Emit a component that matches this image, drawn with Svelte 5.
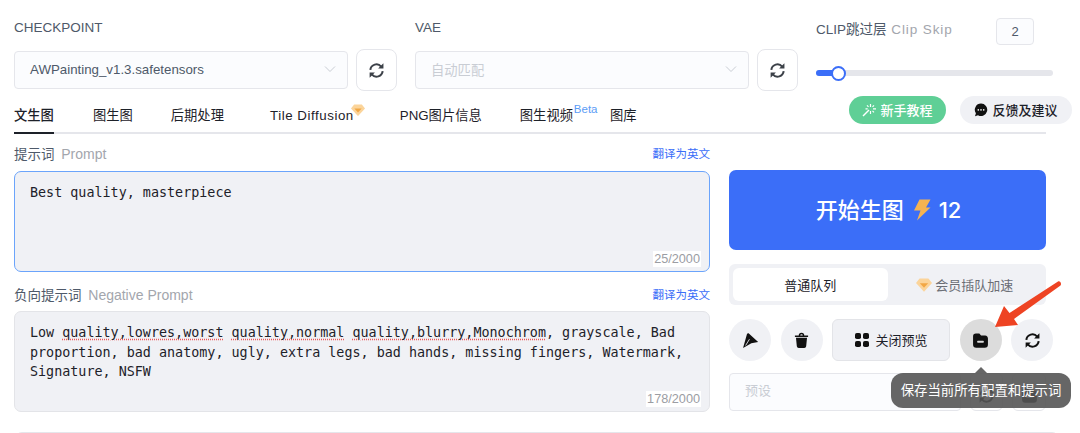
<script>
	const tabs = ['文生图', '图生图', '后期处理', 'Tile Diffusion', 'PNG图片信息', '图生视频', '图库'];
</script>

{#snippet refresh()}
	<svg viewBox="0 0 16 16" width="17" height="17" fill="none" stroke="currentColor" stroke-width="1.9">
		<path d="M2.2 7.400A5.800 5.800 0 0 1 12.400 4.300" />
		<path d="M13.800 8.600A5.800 5.800 0 0 1 3.600 11.700" />
		<path d="M14.500 1.200v5h-5z" fill="currentColor" stroke="none" />
		<path d="M1.500 14.800v-5h5z" fill="currentColor" stroke="none" />
	</svg>
{/snippet}

{#snippet chevron()}
	<svg class="chevron" viewBox="0 0 12 8" width="12" height="8" fill="none" stroke="#c9cdd4" stroke-width="1">
		<path d="M1 1.500l5 5 5-5" />
	</svg>
{/snippet}

{#snippet gem(size)}
	<svg viewBox="0 0 16 14" width={size} height={size * 0.875}>
		<path d="M3.600 0.500h8.800L16 5 8 13.800 0 5z" fill="#fbd49a" />
		<path d="M3.800 5.200h8.400L8 9.800z" fill="#f2a744" />
	</svg>
{/snippet}

{#snippet folder(fill, dash)}
	<svg viewBox="0 0 16 16" width="17" height="17">
		<path d="M1 4.200A2.700 2.700 0 0 1 3.700 1.500h2.500c.8 0 1.200.4 1.700 1l.6.700h3.800A3 3 0 0 1 15 6.200v5.600a3 3 0 0 1-3 3H4a3 3 0 0 1-3-3z" fill={fill} />
		<rect x="4.800" y="8.300" width="6.400" height="1.700" rx=".8" fill={dash} />
	</svg>
{/snippet}

<div class="page">
	<div class="top">
		<div class="field">
			<div class="field-label">CHECKPOINT</div>
			<div class="select-row">
				<div class="select">
					<span>AWPainting_v1.3.safetensors</span>
					{@render chevron()}
				</div>
				<button class="square">{@render refresh()}</button>
			</div>
		</div>
		<div class="field">
			<div class="field-label">VAE</div>
			<div class="select-row">
				<div class="select placeholder">
					<span>自动匹配</span>
					{@render chevron()}
				</div>
				<button class="square">{@render refresh()}</button>
			</div>
		</div>
		<div class="clip">
			<div class="clip-head">
				<span>CLIP跳过层 <em class="skip">Clip Skip</em></span>
				<div class="clip-value">2</div>
			</div>
			<div class="slider">
				<div class="slider-fill"></div>
				<div class="slider-thumb"></div>
			</div>
		</div>
	</div>

	<div class="tabs-row">
		<div class="tabs">
			{#each tabs as tab, i}
				<div class="tab" class:active={i === 0}>
					{tab}
					{#if tab === 'Tile Diffusion'}
						<span class="tab-gem">{@render gem(14)}</span>
					{/if}
					{#if tab === '图生视频'}
						<sup>Beta</sup>
					{/if}
				</div>
			{/each}
		</div>
		<div class="pills">
			<div class="pill green">
				<svg viewBox="0 0 14 14" width="14" height="14" fill="none" stroke="#fff" stroke-width="1.200">
					<path d="M1 13L7 7" stroke-width="1.500" />
					<path d="M8.500 1v3M8.500 8v3M3.500 5.800h2.200M11 5.800h3M5 2.300l1.500 1.500M10.500 7.800l1.500 1.500M12 2.300L10.500 3.800" />
				</svg>
				新手教程
			</div>
			<div class="pill grey">
				<svg viewBox="0 0 14 14" width="14" height="14">
					<path d="M7 .6a6.200 6.200 0 1 1-3 11.600L1 13.200l.9-2.900A6.200 6.200 0 0 1 7 .6z" fill="#111" />
					<circle cx="4.300" cy="6.900" r=".8" fill="#fff" />
					<circle cx="7" cy="6.900" r=".8" fill="#fff" />
					<circle cx="9.700" cy="6.900" r=".8" fill="#fff" />
				</svg>
				反馈及建议
			</div>
		</div>
	</div>

	<div class="main">
		<div class="prompts">
			<div class="prompt-head">
				<span>提示词 <em>Prompt</em></span>
				<span class="translate">翻译为英文</span>
			</div>
			<div class="prompt focused">
				Best quality, masterpiece
				<span class="count">25/2000</span>
			</div>
			<div class="prompt-head second">
				<span>负向提示词 <em>Negative Prompt</em></span>
				<span class="translate">翻译为英文</span>
			</div>
			<div class="prompt">
				Low <u>quality,lowres,worst</u> <u>quality,normal</u> <u>quality,blurry,Monochrom</u>, grayscale, Bad proportion, bad anatomy, ugly, extra legs, bad hands, missing fingers, Watermark, Signature, NSFW
				<span class="count">178/2000</span>
			</div>
		</div>

		<div class="side">
			<button class="start">
				<span class="start-text">开始生图</span>
				<svg viewBox="0 0 18 22" width="18" height="22">
					<path d="M6.500 .5h11L13 8.500h4.500L4 21.500 7.500 11.500H1z" fill="#f6b352" />
				</svg>
				<span class="cost">12</span>
			</button>
			<div class="queue">
				<div class="queue-item on">普通队列</div>
				<div class="queue-item">{@render gem(16)} 会员插队加速</div>
			</div>
			<div class="actions">
				<div class="round">
					<svg viewBox="0 0 16 16" width="17" height="17">
						<path d="M4.700 1.800c.5-.8 1.300-.8 2-.2L15.200 9.500 8.800 10.500 1 15z" fill="#111" />
						<path d="M3.400 12.700L7 6.800" stroke="#f0f1f5" stroke-width=".8" />
					</svg>
				</div>
				<div class="round">
					<svg viewBox="0 0 16 16" width="17" height="17" fill="#111">
						<path d="M1.800 3.200h12.400v1.500H1.800zM5.400 3.200a2.600 2.400 0 0 1 5.200 0H9.200a1.200 1 0 0 0-2.400 0z" />
						<path d="M2.800 5.400h10.400l-.8 8a1.800 1.800 0 0 1-1.800 1.600H5.400a1.800 1.800 0 0 1-1.800-1.600z" />
					</svg>
				</div>
				<div class="preview">
					<svg viewBox="0 0 16 16" width="16" height="16" fill="#111">
						<rect x="1" y="1" width="6" height="6" rx="1.800" />
						<rect x="9" y="1" width="6" height="6" rx="1.800" />
						<rect x="1" y="9" width="6" height="6" rx="1.800" />
						<rect x="9" y="9" width="6" height="6" rx="1.800" />
					</svg>
					<span class="preview-text">关闭预览</span>
				</div>
				<div class="round hover">{@render folder('#111', '#ddd')}</div>
				<div class="round">{@render refresh()}</div>
			</div>
			<div class="preset">
				<div class="preset-input">预设</div>
				<div class="preset-btn">{@render refresh()}</div>
				<div class="preset-btn">{@render folder('#111', '#fff')}</div>
			</div>
			<div class="tooltip">保存当前所有配置和提示词</div>
			<svg class="pointer" viewBox="990 278 75 52" width="75" height="52">
				<path d="M995 327L1004 306 1009.500 313 1058 281.500c2-1 4 2 2.500 4L1014 319 1018 325z" fill="#ee4323" />
			</svg>
		</div>
	</div>

	<div class="next-panel"></div>
</div>

<style>
	:global(body) {
		background: #fff;
	}

	.page {
		position: relative;
		width: 1080px;
		height: 433px;
		overflow: hidden;
		box-sizing: border-box;
		padding: 0 0 0 14px;
		font-family: "Liberation Sans", "Noto Sans CJK SC", sans-serif;
		color: #1d2129;
	}

	em {
		font-style: normal;
		font-size: 14px;
		color: #a3a6ad;
		margin-left: 3px;
	}

	em.skip {
		font-size: 13.500px;
		letter-spacing: 0.9px;
		margin-left: 1px;
	}

	.top {
		display: flex;
		height: 94px;
	}

	.field {
		width: 383px;
		margin-right: 18px;
		padding-top: 20px;
	}

	.field-label {
		font-size: 13.500px;
		line-height: 16px;
		color: #4e5969;
		margin-bottom: 13px;
	}

	.select-row {
		display: flex;
		align-items: center;
		gap: 8px;
	}

	.select {
		flex: 1;
		height: 38px;
		box-sizing: border-box;
		display: flex;
		align-items: center;
		justify-content: space-between;
		padding: 0 11px 2px 15px;
		background: #fbfcfe;
		border: 1px solid #e5e6eb;
		border-radius: 4px;
		font-size: 13.300px;
		color: #4e5969;
	}

	.placeholder {
		color: #c9cdd4;
	}

	.square {
		width: 41px;
		height: 42px;
		flex: none;
		display: flex;
		align-items: center;
		justify-content: center;
		padding: 0;
		background: #fff;
		border: 1px solid #e5e6eb;
		border-radius: 8px;
		color: #3c4148;
	}

	.clip {
		width: 237px;
		padding-top: 18px;
	}

	.clip-head {
		display: flex;
		align-items: flex-start;
		justify-content: space-between;
		height: 27px;
		padding-right: 19px;
		font-size: 13.500px;
		line-height: 24px;
		color: #4e5969;
	}

	.clip-value {
		width: 38px;
		height: 27px;
		box-sizing: border-box;
		border: 1px solid #e5e6eb;
		border-radius: 4px;
		background: #fbfcfe;
		display: flex;
		align-items: center;
		justify-content: center;
		font-size: 13px;
	}

	.slider {
		position: relative;
		height: 6px;
		margin-top: 25px;
		background: #e5e6eb;
		border-radius: 3px;
	}

	.slider-fill {
		width: 22px;
		height: 6px;
		background: #3b6ef8;
		border-radius: 3px;
	}

	.slider-thumb {
		position: absolute;
		left: 15px;
		top: -4.500px;
		width: 15px;
		height: 15px;
		box-sizing: border-box;
		background: #fff;
		border: 2.500px solid #3b6ef8;
		border-radius: 50%;
	}

	.tabs-row {
		position: relative;
		width: 1032px;
		height: 38px;
		border-bottom: 2px solid #e5e6eb;
		display: flex;
		justify-content: space-between;
	}

	.tabs {
		display: flex;
	}

	.tab {
		position: relative;
		height: 40px;
		box-sizing: border-box;
		padding-top: 13px;
		margin-right: 38px;
		font-size: 13.300px;
		line-height: 18px;
		color: #1d2129;
		white-space: nowrap;
	}

	.tab:nth-child(1) {
		margin-right: 39px;
	}

	.tab:nth-child(3),
	.tab:nth-child(4) {
		margin-right: 46px;
	}

	.tab:nth-child(4) {
		letter-spacing: 0.55px;
	}

	.tab:nth-child(6) {
		margin-right: 37px;
	}

	.tab.active {
		font-weight: 500;
		border-bottom: 2px solid #1d2129;
	}

	.tab-gem {
		position: absolute;
		right: -11px;
		top: 9px;
	}

	sup {
		position: absolute;
		left: 54px;
		top: 9px;
		font-size: 11.500px;
		line-height: 12px;
		color: #5b9cf6;
		vertical-align: baseline;
	}

	.pills {
		position: absolute;
		left: 835px;
		top: 2px;
		display: flex;
		gap: 14px;
	}

	.pill {
		height: 28px;
		box-sizing: border-box;
		padding-bottom: 1px;
		display: flex;
		align-items: center;
		justify-content: center;
		gap: 4px;
		border-radius: 15px;
		font-size: 13px;
		font-weight: 500;
		white-space: nowrap;
	}

	.green {
		width: 97px;
		background: #5fcf96;
		color: #fff;
	}

	.grey {
		width: 112px;
		background: #f0f1f5;
	}

	.main {
		display: flex;
		gap: 19px;
	}

	.prompts {
		width: 696px;
	}

	.prompt-head {
		display: flex;
		align-items: center;
		justify-content: space-between;
		box-sizing: border-box;
		height: 37px;
		padding-top: 1px;
		font-size: 13.500px;
		color: #4e5969;
	}

	.prompt-head.second {
		height: 39px;
		padding-top: 4px;
	}

	.translate {
		font-size: 11.500px;
		color: #3b6ef8;
	}

	.prompt {
		position: relative;
		height: 101px;
		box-sizing: border-box;
		padding: 11px 15px;
		background: #f0f1f5;
		border: 1px solid #e3e4e8;
		border-radius: 7px;
		font-family: "DejaVu Sans Mono", monospace;
		font-size: 13.400px;
		line-height: 19.500px;
		color: #1d2129;
	}

	.prompt.focused {
		border-color: #6ba4fb;
	}

	u {
		text-decoration: underline dotted #ea5a5a;
		text-underline-offset: 2px;
	}

	.count {
		position: absolute;
		right: 8px;
		bottom: 4px;
		padding: 0 1px;
		background: #fff;
		font-family: "Liberation Sans", sans-serif;
		font-size: 12.700px;
		line-height: 16px;
		color: #9b9da3;
	}

	.side {
		position: relative;
		width: 317px;
		padding-top: 36px;
	}

	.start {
		width: 100%;
		height: 80px;
		display: flex;
		align-items: center;
		justify-content: center;
		gap: 8px;
		padding: 0;
		background: #3b6ef8;
		border: 0;
		border-radius: 7px;
		color: #fff;
		font-family: inherit;
		font-size: 22px;
		font-weight: 500;
	}

	.start-text {
		margin: 0 1px 4px 2px;
	}

	.cost {
		font-family: Inter, sans-serif;
		font-weight: 500;
	}

	.queue {
		display: flex;
		height: 41px;
		box-sizing: border-box;
		margin-top: 14px;
		padding: 4px;
		background: #f0f1f5;
		border-radius: 6px;
	}

	.queue-item {
		display: flex;
		align-items: center;
		justify-content: center;
		gap: 3px;
		width: 155px;
		border-radius: 6px;
		font-size: 13px;
		color: #6b6e75;
	}

	.queue-item.on {
		background: #fff;
		color: #1d2129;
	}

	.actions {
		display: flex;
		align-items: center;
		margin-top: 14px;
		width: 324px;
		justify-content: space-between;
	}

	.round {
		width: 42px;
		height: 42px;
		display: flex;
		align-items: center;
		justify-content: center;
		border-radius: 50%;
		background: #f0f1f5;
		color: #111;
	}

	.round.hover {
		background: #dcdcdc;
	}

	.preview {
		width: 118px;
		height: 42px;
		box-sizing: border-box;
		display: flex;
		align-items: center;
		justify-content: center;
		gap: 5px;
		background: #f0f1f5;
		border: 1px solid #e3e4e8;
		border-radius: 6px;
		font-size: 13px;
		color: #1d2129;
	}

	.preview-text {
		margin-bottom: 2px;
	}

	.preset {
		display: flex;
		gap: 9px;
		margin-top: 12px;
		height: 38px;
	}

	.preset-input {
		width: 235px;
		box-sizing: border-box;
		padding: 0 15px;
		line-height: 34px;
		background: #fbfcfe;
		border: 1px solid #e5e6eb;
		border-radius: 4px;
		font-size: 13px;
		color: #c9cdd4;
	}

	.preset-btn {
		width: 34px;
		box-sizing: border-box;
		display: flex;
		align-items: center;
		justify-content: center;
		padding-top: 6px;
		border: 1px solid #e5e6eb;
		border-radius: 6px;
		color: #111;
	}

	.tooltip {
		position: absolute;
		left: 162px;
		top: 239px;
		width: 180px;
		height: 35px;
		box-sizing: border-box;
		padding-bottom: 3px;
		display: flex;
		align-items: center;
		justify-content: center;
		background: rgba(85, 85, 85, 0.9);
		border-radius: 12px;
		color: #fff;
		font-size: 13.400px;
		white-space: nowrap;
	}

	.tooltip::before {
		content: '';
		position: absolute;
		left: 84px;
		top: -6px;
		border: 6px solid transparent;
		border-top: 0;
		border-bottom-color: rgba(85, 85, 85, 0.9);
	}

	.pointer {
		position: absolute;
		left: 261px;
		top: 144px;
	}

	.next-panel {
		height: 20px;
		width: 1046px;
		margin-top: 20px;
		box-sizing: border-box;
		border: 1px solid #e5e6eb;
		border-radius: 8px;
	}
</style>
